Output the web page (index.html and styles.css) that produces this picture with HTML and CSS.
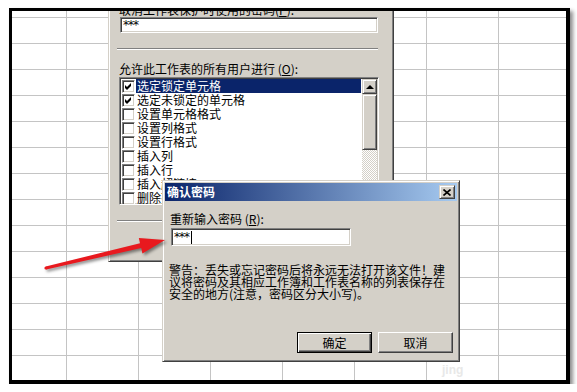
FILE: index.html
```html
<!DOCTYPE html>
<html>
<head>
    <meta charset="utf-8" />
    <title>确认密码</title>
    <link rel="stylesheet" href="styles.css">
</head>
<body>
    <div class="frame">
        <div class="sheet">
            <!-- 保护工作表 (背后的对话框) -->
            <div class="dlg protect">
                <div class="lbl">取消工作表保护时使用的密码(<u>P</u>):</div>
                <div class="field pwd1">***</div>
                <div class="sep"></div>
                <div class="lbl lbl2">允许此工作表的所有用户进行 (<u>O</u>):</div>
                <div class="listbox">
                    <ul class="items">
                        <li class="sel"><span class="chk"><svg viewBox="0 0 11 11"><polygon points="2,4 4,6 8,2 8,5 4,9 2,7" /></svg></span><span class="txt">选定锁定单元格</span></li>
                        <li><span class="chk"><svg viewBox="0 0 11 11"><polygon points="2,4 4,6 8,2 8,5 4,9 2,7" /></svg></span><span class="txt">选定未锁定的单元格</span></li>
                        <li><span class="chk"></span><span class="txt">设置单元格格式</span></li>
                        <li><span class="chk"></span><span class="txt">设置列格式</span></li>
                        <li><span class="chk"></span><span class="txt">设置行格式</span></li>
                        <li><span class="chk"></span><span class="txt">插入列</span></li>
                        <li><span class="chk"></span><span class="txt">插入行</span></li>
                        <li><span class="chk"></span><span class="txt">插入超链接</span></li>
                        <li><span class="chk"></span><span class="txt">删除列</span></li>
                    </ul>
                    <div class="vscroll">
                        <div class="sbtn"><span class="tri"></span></div>
                        <div class="thumb"></div>
                        <div class="track"></div>
                    </div>
                </div>
                <div class="sep sep2"></div>
            </div>

            <!-- 确认密码 -->
            <div class="dlg confirm">
                <div class="titlebar">
                    <span class="ttl">确认密码</span>
                    <span class="close"><svg viewBox="0 0 8 7"><path d="M0.5 0.5 L7.5 6.5 M7.5 0.5 L0.5 6.5" /></svg></span>
                </div>
                <div class="body">
                    <div class="lbl lbl3">重新输入密码 (<u>R</u>):</div>
                    <div class="field pwd2">***<span class="caret"></span></div>
                    <p class="warn">警告：丢失或忘记密码后将永远无法打开该文件！建议将密码及其相应工作簿和工作表名称的列表保存在安全的地方(注意，密码区分大小写)。</p>
                    <div class="btns">
                        <button class="btn def">确定</button>
                        <button class="btn">取消</button>
                    </div>
                </div>
            </div>

            <svg class="arrow" viewBox="12 11 554 369">
                <polygon points="45.7,266.5 140,243.3 138.8,237.9 165,240 142.4,253.5 141.2,248.1 46.3,269.5" />
                <circle cx="46" cy="268" r="1.6" />
            </svg>
            <div class="wm">jing</div>
        </div>
    </div>
</body>
</html>
```

FILE: styles.css
```css
html,body,ul,li,p{margin:0;padding:0;}
*{box-sizing:border-box;}
body{font-family:"Noto Sans CJK SC","Noto Sans",sans-serif;font-size:12px;color:#000;background:#fff;padding:8px 0 0 9px;}

/* 外框 + 表格网格 */
.frame{width:561px;height:376px;border:3px solid #000;border-right-width:4px;border-bottom-width:4px;box-shadow:3px 3px 4px rgba(0,0,0,.45);}
.sheet{position:relative;width:100%;height:100%;overflow:hidden;background-color:#fff;
    background-image:linear-gradient(to right,transparent 71px,#c4c4c4 71px),linear-gradient(to bottom,transparent 25px,#c4c4c4 25px);
    background-size:72px 100%,100% 26px;background-position:55px 0,0 7px;}

/* 对话框通用 */
.dlg{position:absolute;background:#d4d0c8;border:1px solid;border-color:#d4d0c8 #404040 #404040 #d4d0c8;box-shadow:inset 1px 1px #fff,inset -1px -1px #808080;}
.lbl{height:13px;line-height:13px;white-space:nowrap;}
.field{background:#fff;border:1px solid;border-color:#808080 #fff #fff #808080;box-shadow:inset 1px 1px #404040,inset -1px -1px #d4d0c8;padding-left:2px;white-space:nowrap;font-family:"DejaVu Sans",sans-serif;font-size:12px;letter-spacing:-1px;}
.sep{height:2px;border-top:1px solid #808080;border-bottom:1px solid #fff;}

/* 保护工作表 */
.protect{left:96px;top:-21px;width:286px;height:272px;padding:12px 0 0 8px;}
.protect .lbl{margin-left:2px;}
.pwd1{margin:1px 0 0 3px;width:258px;height:16px;line-height:15px;}
.protect .sep{width:261px;margin-top:15px;}
.lbl2{margin-top:12px;}
.listbox{display:flex;margin:2px 0 0 2px;width:260px;height:128px;padding:1px;overflow:hidden;background:#fff;border:1px solid;border-color:#808080 #fff #fff #808080;box-shadow:inset 1px 1px #404040,inset -1px -1px #d4d0c8;}
.items{list-style:none;flex:1;}
.items li{display:flex;align-items:center;height:14px;}
.chk{width:13px;height:13px;margin-left:1px;flex:none;background:#fff;border:1px solid;border-color:#808080 #fff #fff #808080;box-shadow:inset 1px 1px #404040,inset -1px -1px #d4d0c8;}
.chk svg{display:block;width:11px;height:11px;}
.chk polygon{fill:#000;}
.txt{flex:1;height:14px;line-height:14px;margin:0 1px 0 1px;padding-left:1px;white-space:nowrap;}
.sel .txt{background:#0a246a;color:#fff;}
.vscroll{width:15px;flex:none;display:flex;flex-direction:column;}
.sbtn,.thumb,.close{background:#d4d0c8;border:1px solid;border-color:#d4d0c8 #404040 #404040 #d4d0c8;box-shadow:inset 1px 1px #fff,inset -1px -1px #808080;}
.sbtn{height:15px;display:flex;align-items:center;justify-content:center;}
.tri{width:0;height:0;border-left:4px solid transparent;border-right:4px solid transparent;border-bottom:4px solid #000;}
.thumb{height:56px;}
.track{flex:1;background:repeating-conic-gradient(#fff 0 25%,#d4d0c8 0 50%) 0 0/2px 2px;}
.sep2{margin-top:14px;}

/* 确认密码 */
.confirm{left:150px;top:169px;width:298px;height:182px;padding:2px;z-index:2;}
.titlebar{height:18px;display:flex;align-items:center;justify-content:space-between;padding:0 2px 0 2px;background:linear-gradient(to right,#0a246a,#a6caf0);color:#fff;font-weight:bold;}
.ttl{line-height:18px;}
.close{width:16px;height:14px;display:flex;align-items:center;justify-content:center;}
.close svg{width:8px;height:7px;}
.close path{stroke:#000;stroke-width:1.6;fill:none;}
.body{padding:0 4px 0 5px;}
.lbl3{margin-top:11px;}
.pwd2{margin:3px 0 0 1px;width:180px;height:18px;line-height:17px;}
.caret{display:inline-block;width:1px;height:13px;background:#000;vertical-align:middle;margin-left:2px;}
.warn{margin:18px 0 0 -1px;width:277px;line-height:12px;}
.btns{display:flex;justify-content:flex-end;gap:6px;margin-top:32px;}
.btn{width:75px;height:21px;padding:0;font:inherit;color:#000;background:#d4d0c8;border:1px solid;border-color:#fff #404040 #404040 #fff;box-shadow:inset -1px -1px #808080;}
.btn.def{border-color:#000;box-shadow:inset 1px 1px #fff,inset -1px -1px #404040,inset -2px -2px #808080;}

/* 红色箭头 */
.arrow{position:absolute;left:0;top:0;width:554px;height:369px;z-index:3;pointer-events:none;filter:drop-shadow(2px 2px 1.5px rgba(0,0,0,.45));}
.arrow polygon,.arrow circle{fill:#e8191e;}

.wm{position:absolute;left:430px;top:352px;color:#e8e8e8;font:bold 12px "Liberation Sans",sans-serif;z-index:4;}
```
